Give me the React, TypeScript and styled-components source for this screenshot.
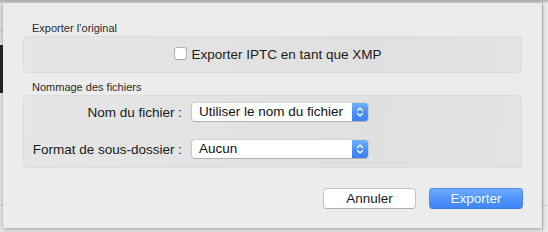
import React from "react";
import styled, { createGlobalStyle } from "styled-components";

const GlobalStyle = createGlobalStyle`
  html, body { margin: 0; padding: 0; }
  body {
    background: #e7e7e7;
    font-family: "Liberation Sans", Arial, Helvetica, sans-serif;
    -webkit-font-smoothing: antialiased;
  }
`;

const Desktop = styled.div`
  width: 548px;
  height: 232px;
  overflow: hidden;
  display: flex;
  flex-direction: column;
  background: #e8e8e8;
`;

const ToolbarEdge = styled.div`
  height: 3px;
  flex: none;
  background: linear-gradient(#a9a9a9, #c4c4c4 50%, #d9d9d9);
`;

const Stage = styled.div`
  flex: 1;
  display: flex;
  align-items: flex-start;
`;

const SideStrip = styled.div<{ $width: number; $line?: boolean }>`
  width: ${(p) => p.$width}px;
  flex: none;
  align-self: stretch;
  display: flex;
  flex-direction: column;
  border-left: ${(p) => (p.$line ? "1px solid #c6c6c6" : "none")};
`;

const StripPart = styled.div<{ $h: number; $bg: string }>`
  height: ${(p) => p.$h}px;
  flex: none;
  background: ${(p) => p.$bg};
`;

const StripFill = styled.div<{ $bg: string }>`
  flex: 1;
  background: ${(p) => p.$bg};
`;

const Sheet = styled.div`
  width: 539px;
  height: 225px;
  flex: none;
  box-sizing: border-box;
  background: #ececec;
  box-shadow: 0 1px 5px rgba(0, 0, 0, 0.35);
  padding: 0 20px;
  display: flex;
  flex-direction: column;
  position: relative;
  z-index: 1;
`;

const GroupLabel = styled.div<{ $top: number }>`
  margin-top: ${(p) => p.$top}px;
  margin-bottom: 1px;
  padding-left: 9px;
  font-size: 11px;
  line-height: 13px;
  color: #2a2a2a;
`;

const GroupBox = styled.div`
  box-sizing: border-box;
  width: 499px;
  background: linear-gradient(100deg, #e6e6e6, #e0e0e0 70%, #e3e3e3);
  border: 1px solid #dcdcdc;
  border-radius: 4px;
`;

const CheckRow = styled.label`
  height: 35px;
  display: flex;
  align-items: center;
  justify-content: center;
  gap: 5px;
  padding-left: 10px;
  font-size: 13.5px;
  color: #1a1a1a;
`;

const CheckBox = styled.span`
  width: 13px;
  height: 13px;
  box-sizing: border-box;
  background: #fff;
  border: 1px solid #b2b2b2;
  border-bottom-color: #a0a0a0;
  border-radius: 3px;
  margin-top: -2px;
`;

const FormGrid = styled.div`
  display: grid;
  grid-template-columns: 158px 178px;
  column-gap: 9px;
  row-gap: 17px;
  padding: 6px 0 8px 0;
  align-items: center;
`;

const FieldLabel = styled.div`
  text-align: right;
  font-size: 13.5px;
  color: #1a1a1a;
  white-space: nowrap;
`;

const Popup = styled.div`
  height: 20px;
  box-sizing: border-box;
  display: flex;
  align-items: stretch;
  background: #fff;
  border: 1px solid #c9c9c9;
  border-top-color: #d2d2d2;
  border-bottom-color: #b3b3b3;
  border-radius: 4px;
  overflow: hidden;
`;

const PopupText = styled.span`
  flex: 1;
  padding-left: 7px;
  font-size: 13.5px;
  line-height: 18px;
  color: #111;
  white-space: nowrap;
  overflow: hidden;
`;

const PopupArrow = styled.span`
  width: 16px;
  flex: none;
  display: flex;
  align-items: center;
  justify-content: center;
  background: linear-gradient(#6db2fb, #4a8ff7 55%, #3a7ff4);
`;

const ButtonRow = styled.div`
  margin-top: 20px;
  display: flex;
  justify-content: flex-end;
  gap: 13px;
  margin-right: -1px;
`;

const Button = styled.button<{ $primary?: boolean }>`
  width: ${(p) => (p.$primary ? 94 : 93)}px;
  height: 21px;
  box-sizing: border-box;
  padding: 0;
  font-family: inherit;
  font-size: 13.5px;
  line-height: 19px;
  border-radius: 4px;
  color: ${(p) => (p.$primary ? "#f3f7ff" : "#1a1a1a")};
  background: ${(p) =>
    p.$primary ? "linear-gradient(#6eacfd, #5094f9 50%, #3f85f6)" : "#fff"};
  border: 1px solid ${(p) => (p.$primary ? "#4b8cf5" : "#c4c4c4")};
  border-bottom-color: ${(p) => (p.$primary ? "#3a78e8" : "#acacac")};
`;

const Chevrons = () => (
  <svg width="8" height="12" viewBox="0 0 8 12" fill="none">
    <path d="M1.5 4.5 L4 2 L6.5 4.5" stroke="#fff" strokeWidth="1.3" strokeLinecap="round" strokeLinejoin="round" />
    <path d="M1.5 7.5 L4 10 L6.5 7.5" stroke="#fff" strokeWidth="1.3" strokeLinecap="round" strokeLinejoin="round" />
  </svg>
);

export default function App() {
  return (
    <>
      <GlobalStyle />
      <Desktop>
        <ToolbarEdge />
        <Stage>
          <SideStrip $width={3}>
            <StripPart $h={27} $bg="#e4e4e4" />
            <StripPart $h={1} $bg="#bdbdbd" />
            <StripPart $h={14} $bg="#e6e6e6" />
            <StripPart $h={48} $bg="#2a2622" />
            <StripPart $h={112} $bg="#ebebeb" />
            <StripPart $h={1} $bg="#d0d0d0" />
            <StripFill $bg="#ebebeb" />
          </SideStrip>
          <Sheet>
            <GroupLabel $top={19}>Exporter l’original</GroupLabel>
            <GroupBox>
              <CheckRow>
                <CheckBox />
                Exporter IPTC en tant que XMP
              </CheckRow>
            </GroupBox>
            <GroupLabel $top={8}>Nommage des fichiers</GroupLabel>
            <GroupBox>
              <FormGrid>
                <FieldLabel>Nom du fichier :</FieldLabel>
                <Popup>
                  <PopupText>Utiliser le nom du fichier</PopupText>
                  <PopupArrow>
                    <Chevrons />
                  </PopupArrow>
                </Popup>
                <FieldLabel>Format de sous-dossier :</FieldLabel>
                <Popup>
                  <PopupText>Aucun</PopupText>
                  <PopupArrow>
                    <Chevrons />
                  </PopupArrow>
                </Popup>
              </FormGrid>
            </GroupBox>
            <ButtonRow>
              <Button>Annuler</Button>
              <Button $primary>Exporter</Button>
            </ButtonRow>
          </Sheet>
          <SideStrip $width={5} $line>
            <StripPart $h={202} $bg="#ececec" />
            <StripPart $h={1} $bg="#d2d2d2" />
            <StripFill $bg="#ececec" />
          </SideStrip>
        </Stage>
      </Desktop>
    </>
  );
}
